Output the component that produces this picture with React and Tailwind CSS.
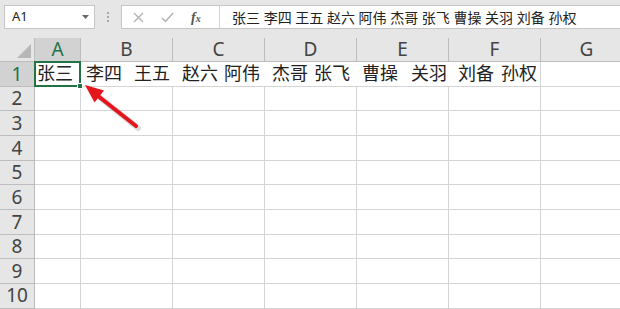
import React from 'react';

const COLS = ['A', 'B', 'C', 'D', 'E', 'F', 'G'];
const ROWS = [2, 3, 4, 5, 6, 7, 8, 9, 10];
const WORDS = [
  ['张三', 0],
  ['李四', 13],
  ['王五', 12],
  ['赵六', 12],
  ['阿伟', 6],
  ['杰哥', 12],
  ['张飞', 6],
  ['曹操', 12],
  ['关羽', 13],
  ['刘备', 11],
  ['孙权', 7],
];

const Arrow = () => (
  <svg className="absolute left-0 top-0 pointer-events-none" width="620" height="309">
    <line x1="138" y1="128" x2="98" y2="96" stroke="#9a9a9a" strokeOpacity="0.35" strokeWidth="6" strokeLinecap="round" />
    <line x1="136" y1="126" x2="98" y2="96" stroke="#e5161b" strokeWidth="4" strokeLinecap="round" />
    <polygon points="85,85 104,90.5 94.5,102.5" fill="#e5161b" />
  </svg>
);

const Toolbar = () => (
  <div className="h-[38px] bg-[#e6e6e6] flex items-start pt-[5px] pl-[4px]">
    <div className="w-[91px] h-[24px] bg-white border border-[#c6c6c6] flex items-center justify-between pl-[7px] pr-[5px] text-[13px] text-[#222]">
      <span>A1</span>
      <svg width="7" height="4" viewBox="0 0 7 4"><polygon points="0,0 7,0 3.5,4" fill="#6a6a6a" /></svg>
    </div>
    <div className="w-[26px] h-[24px] flex flex-col items-center justify-center gap-[2px]">
      <span className="w-[2px] h-[2px] bg-[#a8a8a8]" />
      <span className="w-[2px] h-[2px] bg-[#a8a8a8]" />
      <span className="w-[2px] h-[2px] bg-[#a8a8a8]" />
    </div>
    <div className="flex-1 h-[24px] bg-white border border-r-0 border-[#c6c6c6] flex">
      <div className="w-[97px] flex items-center pl-[11px] gap-[17px]">
        <svg width="11" height="11" viewBox="0 0 11 11"><path d="M1 1L10 10M10 1L1 10" stroke="#b0b0b0" strokeWidth="1.3" /></svg>
        <svg width="13" height="11" viewBox="0 0 13 11"><path d="M1 6L4.5 9.5L12 1" stroke="#b0b0b0" strokeWidth="1.5" fill="none" /></svg>
        <span className="italic font-bold text-[14px] text-[#555] font-['Liberation_Serif',serif]">
          f<span className="text-[10px]">x</span>
        </span>
      </div>
      <div className="flex-1 border-l border-[#d6d6d6] flex items-center pl-[12px] text-[14px] text-[#222] whitespace-nowrap">
        张三 李四 王五 赵六 阿伟 杰哥 张飞 曹操 关羽 刘备 孙权
      </div>
    </div>
  </div>
);

const Grid = () => (
  <div className="grid grid-cols-[35px_46px_92px_92px_92px_92px_92px_92px] grid-rows-[24px_repeat(10,24.67px)] text-[18px]">
    {/* corner */}
    <div className="bg-[#e6e6e6] border-r border-b border-[#bdbdbd] flex items-end justify-end p-[3px]">
      <svg width="14" height="14" viewBox="0 0 14 14"><polygon points="14,0 14,14 0,14" fill="#b7b7b7" /></svg>
    </div>
    {COLS.map((c, i) => (
      <div
        key={c}
        className={
          i === 0
            ? 'bg-[#d2d2d2] border-r border-b border-[#bdbdbd] text-[#217346] text-[19px] flex items-center justify-center'
            : 'bg-[#e6e6e6] border-r border-b border-[#bdbdbd] text-[#444] text-[19px] flex items-center justify-center'
        }
      >
        {c}
      </div>
    ))}

    {/* row 1 */}
    <div className="bg-[#d2d2d2] border-r border-b border-[#bdbdbd] text-[#217346] text-[19px] flex items-center justify-center">1</div>
    <div className="col-span-6 relative border-r border-b border-[#d4d4d4] flex items-center pl-[2px] text-[#222] whitespace-nowrap">
      {WORDS.map(([w, m]) => (
        <span key={w + m} style={{ marginLeft: m }}>{w}</span>
      ))}
      <div className="absolute left-[-1px] top-[-1px] w-[47px] h-[26px] border-2 border-[#217346]" />
      <div className="absolute left-[42px] top-[21px] w-[6px] h-[6px] bg-[#217346] border border-white" />
    </div>
    <div className="border-r border-b border-[#d4d4d4]" />

    {ROWS.map((r) => (
      <React.Fragment key={r}>
        <div className="bg-[#e6e6e6] border-r border-b border-[#bdbdbd] text-[#444] text-[19px] flex items-center justify-center">{r}</div>
        {COLS.map((c) => (
          <div key={c} className="border-r border-b border-[#d4d4d4]" />
        ))}
      </React.Fragment>
    ))}
  </div>
);

export default function App() {
  return (
    <div className="w-[620px] h-[309px] overflow-hidden bg-white relative font-['Noto_Sans','Noto_Sans_CJK_SC',sans-serif]">
      <Toolbar />
      <Grid />
      <Arrow />
    </div>
  );
}
